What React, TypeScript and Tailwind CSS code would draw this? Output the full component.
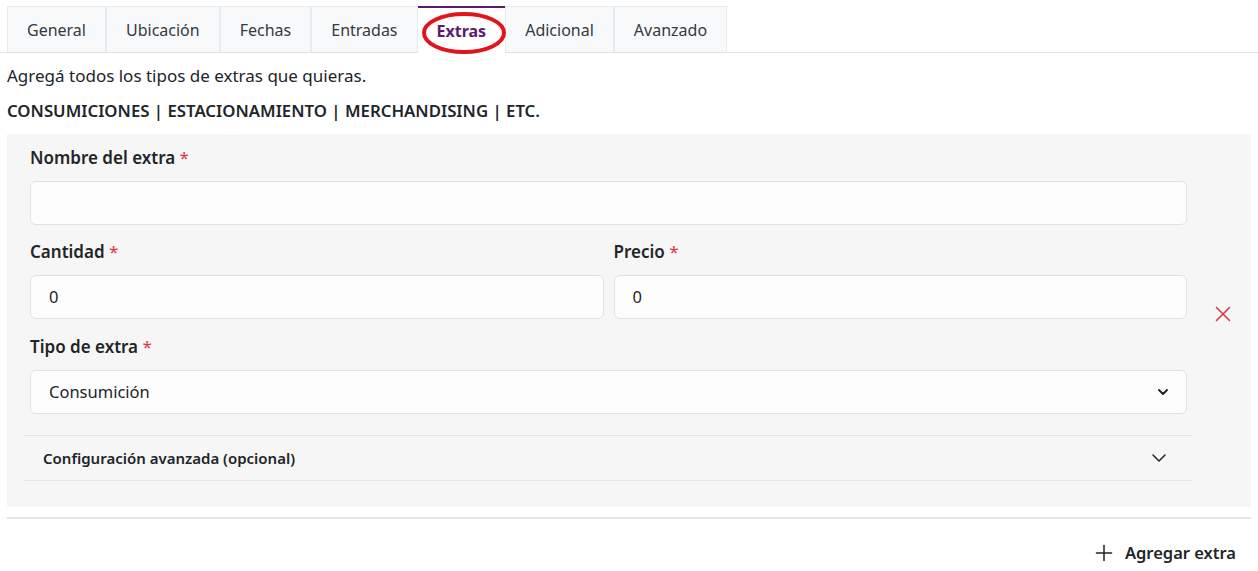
import { ChevronDown, Plus, X } from "lucide-react";

const tabs = ["General", "Ubicación", "Fechas", "Entradas", "Extras", "Adicional", "Avanzado"];

const Label = ({ text }: { text: string }) => (
  <label className="block text-[17px] font-semibold text-[#212529] mb-[12px] leading-[22px]">
    {text} <span className="text-[#dc3545] font-normal">*</span>
  </label>
);

const Field = ({ value }: { value?: string }) => (
  <div className="h-[44px] rounded-md border border-[#dee2e6] bg-[#fdfdfd] px-[18px] flex items-center text-[16.5px] text-[#212529]">
    {value}
  </div>
);

export default function App() {
  return (
    <div className="w-[1258px] h-[571px] bg-white text-[#212529] overflow-hidden" style={{ fontFamily: '"Noto Sans", sans-serif' }}>
      {/* Tabs */}
      <div className="pt-[6px] border-b border-[#dee2e6] flex pl-[7px]">
        {tabs.map((t) => {
          const active = t === "Extras";
          return active ? (
            <div key={t} className="relative h-[47px] -mb-px px-[19px] flex items-center bg-white border-t-2 border-[#5c1b73] text-[16px] font-bold text-[#5c1b73]">
              {t}
              <svg className="absolute left-[3px] top-[3px] pointer-events-none" width="86" height="44" viewBox="0 0 86 44">
                <ellipse cx="43" cy="22" rx="40" ry="19" fill="none" stroke="#e3141b" strokeWidth="4" />
              </svg>
            </div>
          ) : (
            <div key={t} className="h-[47px] -mb-px px-[19px] flex items-center bg-[#f8f9fa] border border-[#e9ecef] border-b-[#dee2e6] text-[16px] text-[#343a40]">
              {t}
            </div>
          );
        })}
      </div>

      <div className="px-[7px]">
        <p className="mt-[12px] text-[17px] leading-[22px]">Agregá todos los tipos de extras que quieras.</p>
        <p className="mt-[13px] text-[16.8px] font-semibold leading-[22px]">CONSUMICIONES | ESTACIONAMIENTO | MERCHANDISING | ETC.</p>

        {/* Extra card */}
        <div className="mt-[12px] bg-[#f6f6f6] pt-[13px] pb-[26px] flex">
          <div className="w-[1180px]">
            <div className="pl-[23px]">
              <Label text="Nombre del extra" />
              <Field />
              <div className="grid grid-cols-2 gap-[10px] mt-[16px]">
                <div>
                  <Label text="Cantidad" />
                  <Field value="0" />
                </div>
                <div>
                  <Label text="Precio" />
                  <Field value="0" />
                </div>
              </div>
              <div className="mt-[17px]">
                <Label text="Tipo de extra" />
                <div className="h-[44px] rounded-md border border-[#dee2e6] bg-[#fdfdfd] px-[18px] flex items-center justify-between text-[16.5px]">
                  <span>Consumición</span>
                  <ChevronDown size={16} strokeWidth={3} className="text-[#212529] -mr-[3px]" />
                </div>
              </div>
            </div>
            <div className="mt-[21px] ml-[17px] mr-[-5px] h-[46px] border-t border-b border-[#e3e3e3] flex items-center justify-between pl-[19px] pr-[21px]">
              <span className="text-[15px] font-semibold text-[#212529]">Configuración avanzada (opcional)</span>
              <ChevronDown size={24} strokeWidth={1.5} className="text-[#212529]" />
            </div>
          </div>
          <div className="flex-1 flex items-center justify-center">
            <X size={26} strokeWidth={1.4} className="text-[#dc3545] ml-[8px]" />
          </div>
        </div>

        <div className="mt-[10px] border-t-2 border-[#e5e5e5]" />

        <div className="flex justify-end pr-[15px] mt-[21px]">
          <div className="flex items-center gap-[8px] text-[16.5px] font-semibold text-[#212529]">
            <Plus size={26} strokeWidth={1.4} />
            Agregar extra
          </div>
        </div>
      </div>
    </div>
  );
}
